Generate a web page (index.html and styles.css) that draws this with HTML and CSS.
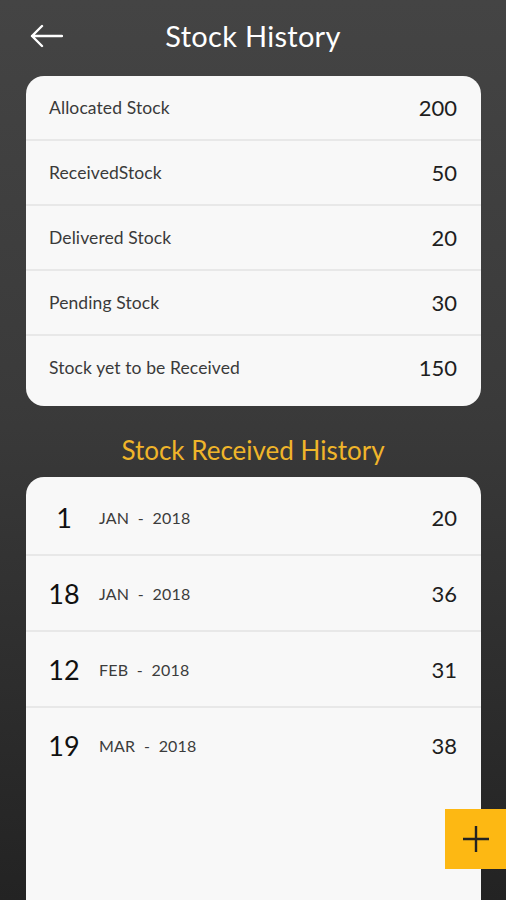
FILE: index.html
```html
<!DOCTYPE html>
<html>
<head>
	<title>Stock History</title>
	<link rel="stylesheet" href="styles.css">
</head>
<body>
	<div class="header">
		<svg class="back" width="34" height="24" viewBox="0 0 34 24">
			<path d="M33 12H3M13 2L3 12l10 10" fill="none" stroke="#fff" stroke-width="2.4" stroke-linecap="round" stroke-linejoin="round"/>
		</svg>
		<h1>Stock History</h1>
	</div>

	<ul class="card summary">
		<li><span class="label">Allocated Stock</span><span class="value">200</span></li>
		<li><span class="label">ReceivedStock</span><span class="value">50</span></li>
		<li><span class="label">Delivered Stock</span><span class="value">20</span></li>
		<li><span class="label">Pending Stock</span><span class="value">30</span></li>
		<li><span class="label">Stock yet to be Received</span><span class="value">150</span></li>
	</ul>

	<h2>Stock Received History</h2>

	<ul class="card history">
		<li><span class="day">1</span><span class="month">JAN&nbsp; -&nbsp; 2018</span><span class="value">20</span></li>
		<li><span class="day">18</span><span class="month">JAN&nbsp; -&nbsp; 2018</span><span class="value">36</span></li>
		<li><span class="day">12</span><span class="month">FEB&nbsp; -&nbsp; 2018</span><span class="value">31</span></li>
		<li><span class="day">19</span><span class="month">MAR&nbsp; -&nbsp; 2018</span><span class="value">38</span></li>
	</ul>

	<button class="fab" type="button">
		<svg width="30" height="30" viewBox="0 0 30 30">
			<path d="M15 2v26M2 15h26" stroke="#222" stroke-width="2.4"/>
		</svg>
	</button>
</body>
</html>
```

FILE: styles.css
```css
body {
	margin: 0;
	height: 900px;
	overflow: hidden;
	font-family: Lato, "Open Sans", sans-serif;
	background: linear-gradient(to bottom, #444444 0%, #3a3a3a 45%, #232323 100%);
	color: #222;
}
.header {
	display: flex;
	align-items: center;
	justify-content: center;
	height: 76px;
	position: relative;
}
.header h1 {
	margin: 0 0 6px 0;
	font-size: 29px;
	font-weight: 400;
	color: #fff;
	letter-spacing: 0.3px;
}
.back {
	position: absolute;
	left: 29px;
	top: 24px;
}
.card {
	list-style-type: none;
	margin: 0 25px 0 26px;
	padding: 0;
	background: #f8f8f8;
	border-radius: 18px;
}
.card li {
	display: flex;
	align-items: center;
	border-bottom: 2px solid #e8e8e8;
}
.card li:last-child {
	border-bottom: none;
}
.summary {
	padding-bottom: 7px;
}
.summary li {
	height: 63px;
	padding: 0 24px 0 23px;
}
.label {
	flex: 1;
	font-size: 17.5px;
	color: #3a3a3a;
	letter-spacing: 0.1px;
}
.value {
	font-size: 22px;
	color: #1e1e1e;
}
h2 {
	margin: 0;
	height: 55px;
	padding-top: 16px;
	display: flex;
	align-items: center;
	justify-content: center;
	font-size: 26px;
	font-weight: 400;
	color: #f0b52a;
}
.history {
	padding-top: 3px;
	height: 500px;
	border-radius: 18px 18px 0 0;
}
.history li {
	height: 74px;
	padding: 0 24px 0 23px;
}
.day {
	width: 32px;
	text-align: center;
	font-size: 27px;
	color: #111;
	margin-right: 19px;
	margin-left: -1px;
}
.month {
	flex: 1;
	font-size: 16px;
	color: #3c3c3c;
	letter-spacing: 0.2px;
}
.fab {
	position: fixed;
	right: 0;
	top: 809px;
	width: 61px;
	height: 60px;
	border: none;
	padding: 0;
	background: #fdb813;
	display: flex;
	align-items: center;
	justify-content: center;
}
```
